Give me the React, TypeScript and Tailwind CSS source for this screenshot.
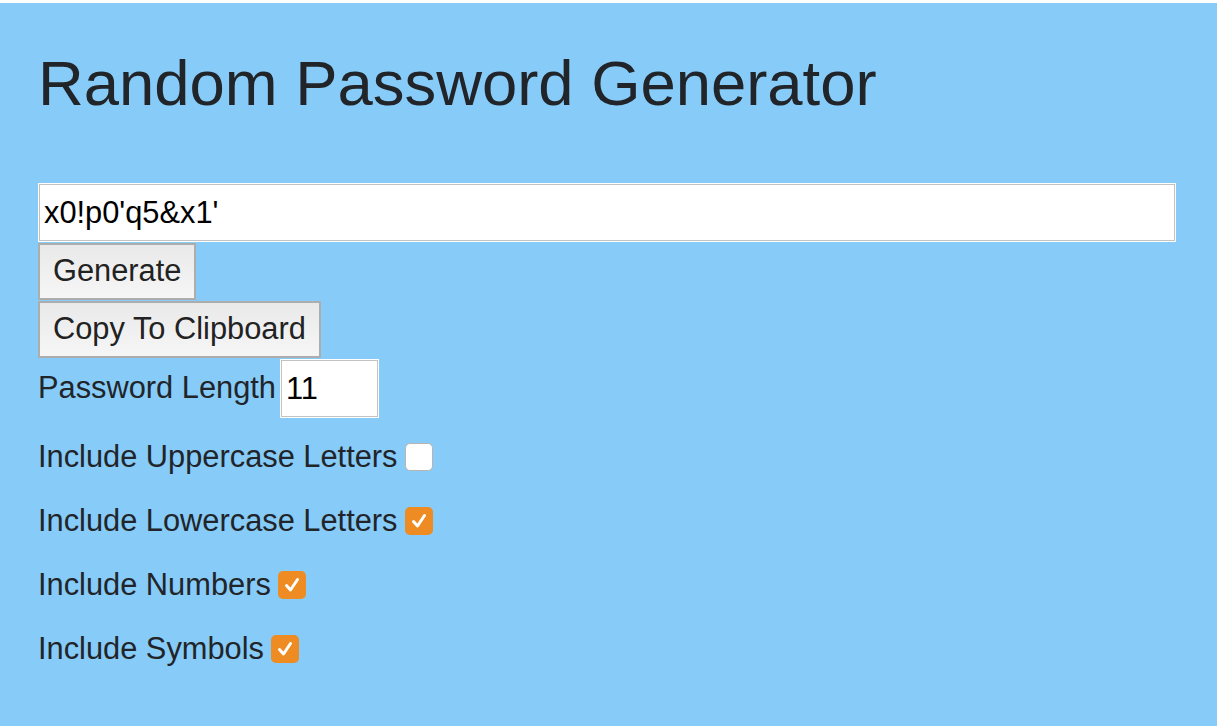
import { useState } from "react";

const options = [
  { id: "upper", label: "Include Uppercase Letters", checked: false },
  { id: "lower", label: "Include Lowercase Letters", checked: true },
  { id: "numbers", label: "Include Numbers", checked: true },
  { id: "symbols", label: "Include Symbols", checked: true },
];

function Check({ on }: { on: boolean }) {
  if (!on) {
    return (
      <span className="block h-[28px] w-[28px] shrink-0 rounded-[5px] border border-[#b9b4b0] bg-white" />
    );
  }
  return (
    <span className="flex h-[28px] w-[28px] shrink-0 items-center justify-center rounded-[5px] bg-[#ee8b22]">
      <svg width="28" height="28" viewBox="0 0 28 28">
        <polyline
          points="8.5,14.5 12.5,19 19.5,8.5"
          fill="none"
          stroke="#ffffff"
          strokeWidth="3"
          strokeLinecap="round"
          strokeLinejoin="round"
        />
      </svg>
    </span>
  );
}

export default function App() {
  const [password] = useState("x0!p0'q5&x1'");
  const [length] = useState(11);

  return (
    <div
      className="min-h-[726px] bg-white pt-[3px]"
      style={{ fontFamily: '"Liberation Sans", Arial, sans-serif' }}
    >
      <div className="h-[723px] bg-[#87cbf8] px-[38px] text-[#212529]">
        <h1 className="pt-[49px] text-[63.4px] leading-[63px] font-medium">
          Random Password Generator
        </h1>

        <div className="mt-[69px] flex flex-col items-start">
          <input
            readOnly
            value={password}
            className="mx-px h-[57px] w-[1136px] border border-[#c3c3c3] bg-white px-[4px] text-[30.8px] text-black shadow-[0_0_0_1px_#ffffff] outline-none"
          />
          <button className="mt-[2px] h-[57px] border-2 border-[#adadad] bg-gradient-to-b from-[#e9e9e9] to-[#f6f6f6] px-[13px] text-[30.8px] leading-none text-[#222]">
            Generate
          </button>
          <button className="mt-px h-[57px] border-2 border-[#adadad] bg-gradient-to-b from-[#e9e9e9] to-[#f6f6f6] px-[13px] text-[30.8px] leading-none text-[#222]">
            Copy To Clipboard
          </button>

          {/* length */}
          <div className="mt-px flex h-[59px] items-center gap-[5px]">
            <span className="text-[30.8px] leading-none">Password Length</span>
            <input
              readOnly
              value={length}
              className="h-[57px] w-[97px] border border-[#c3c3c3] bg-white px-[4px] text-[30.8px] text-black shadow-[0_0_0_1px_#ffffff] outline-none"
            />
          </div>

          <div className="mt-[7px] flex flex-col">
            {options.map((o) => (
              <label key={o.id} className="flex h-[64px] items-center gap-[7px]">
                <span className="text-[30.8px] leading-none">{o.label}</span>
                <Check on={o.checked} />
              </label>
            ))}
          </div>
        </div>
      </div>
    </div>
  );
}
